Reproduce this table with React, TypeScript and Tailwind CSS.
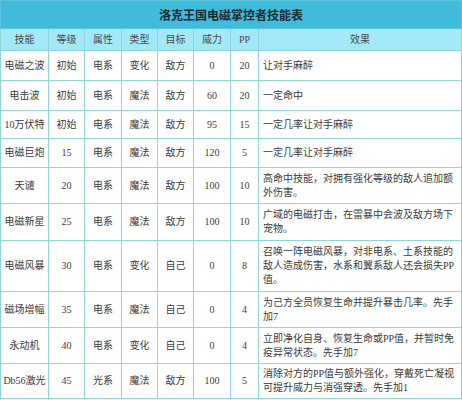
type Skill = {
  name: string;
  level: string;
  attr: string;
  kind: string;
  target: string;
  power: string;
  pp: string;
  effect: string[];
  h: string;
};

const skills: Skill[] = [
  { name: '电磁之波', level: '初始', attr: '电系', kind: '变化', target: '敌方', power: '0', pp: '20', effect: ['让对手麻醉'], h: 'h-[30px]' },
  { name: '电击波', level: '初始', attr: '电系', kind: '魔法', target: '敌方', power: '60', pp: '20', effect: ['一定命中'], h: 'h-[30px]' },
  { name: '10万伏特', level: '初始', attr: '电系', kind: '魔法', target: '敌方', power: '95', pp: '15', effect: ['一定几率让对手麻醉'], h: 'h-[28px]' },
  { name: '电磁巨炮', level: '15', attr: '电系', kind: '魔法', target: '敌方', power: '120', pp: '5', effect: ['一定几率让对手麻醉'], h: 'h-[29px]' },
  { name: '天谴', level: '20', attr: '电系', kind: '魔法', target: '敌方', power: '100', pp: '10', effect: ['高命中技能，对拥有强化等级的敌人追加额', '外伤害。'], h: 'h-[36px]' },
  { name: '电磁新星', level: '25', attr: '电系', kind: '魔法', target: '敌方', power: '100', pp: '10', effect: ['广域的电磁打击，在雷暴中会波及敌方场下', '宠物。'], h: 'h-[37px]' },
  { name: '电磁风暴', level: '30', attr: '电系', kind: '变化', target: '自己', power: '0', pp: '8', effect: ['召唤一阵电磁风暴，对非电系、土系技能的', '敌人造成伤害，水系和翼系敌人还会损失PP', '值。'], h: 'h-[51px]' },
  { name: '磁场增幅', level: '35', attr: '电系', kind: '魔法', target: '自己', power: '0', pp: '4', effect: ['为己方全员恢复生命并提升暴击几率。先手', '加7'], h: 'h-[36px]' },
  { name: '永动机', level: '40', attr: '电系', kind: '变化', target: '自己', power: '0', pp: '4', effect: ['立即净化自身、恢复生命或PP值，并暂时免', '疫异常状态。先手加7'], h: 'h-[36px]' },
  { name: 'Db56激光', level: '45', attr: '光系', kind: '魔法', target: '敌方', power: '100', pp: '5', effect: ['消除对方的PP值与额外强化，穿戴死亡凝视', '可提升威力与消强穿透。先手加1'], h: 'h-[35px]' },
];

const headers = ['技能', '等级', '属性', '类型', '目标', '威力', 'PP', '效果'];

const cell = 'border border-[#92d5d6] text-center align-middle p-0';

export default function App() {
  return (
    <div className="h-[400px] w-[462px] bg-white font-['Liberation_Serif','Noto_Sans_CJK_SC',serif] text-[10px] leading-[14px] text-[#3a3a3a]">
      <table className="w-[461px] table-fixed border-collapse">
        <colgroup>
          <col className="w-[48px]" />
          <col className="w-[36px]" />
          <col className="w-[37px]" />
          <col className="w-[36px]" />
          <col className="w-[36px]" />
          <col className="w-[37px]" />
          <col className="w-[28px]" />
          <col className="w-[203px]" />
        </colgroup>
        <thead>
          <tr className="h-[28px]">
            <th
              colSpan={8}
              className="border border-[#5cc3dc] bg-[#40bbd9] p-0 text-center align-middle font-['Noto_Sans_CJK_SC',sans-serif] text-[12px] font-bold text-[#1c2a33]"
            >
              洛克王国电磁掌控者技能表
            </th>
          </tr>
          <tr className="h-[22px] bg-[#a3e8f7]">
            {headers.map((h) => (
              <th key={h} className={`${cell} font-normal text-[#4a4a4a]`}>
                {h}
              </th>
            ))}
          </tr>
        </thead>
        <tbody>
          {skills.map((s) => (
            <tr key={s.name} className={s.h}>
              <td className={`${cell} whitespace-nowrap`}>{s.name}</td>
              <td className={cell}>{s.level}</td>
              <td className={cell}>{s.attr}</td>
              <td className={cell}>{s.kind}</td>
              <td className={cell}>{s.target}</td>
              <td className={cell}>{s.power}</td>
              <td className={cell}>{s.pp}</td>
              <td className="border border-[#92d5d6] p-0 pl-[4px] text-left align-middle">
                {s.effect.map((line, i) => (
                  <span key={i} className="block whitespace-nowrap">
                    {line}
                  </span>
                ))}
              </td>
            </tr>
          ))}
        </tbody>
      </table>
    </div>
  );
}
